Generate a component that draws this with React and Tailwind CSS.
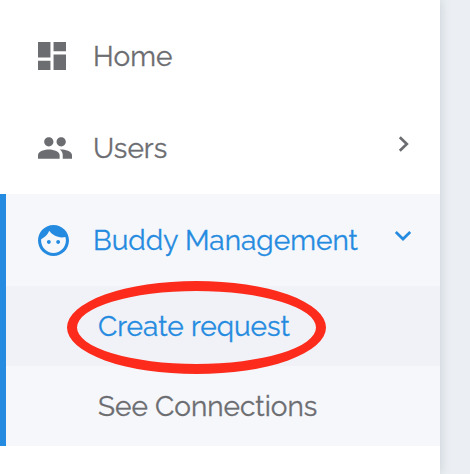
function DashboardIcon() {
  return (
    <svg className="h-7 w-7" viewBox="3 3 18 18" fill="currentColor">
      <path d="M3 13h8V3H3v10zm0 8h8v-6H3v6zm10 0h8V11h-8v10zm0-18v6h8V3h-8z" />
    </svg>
  );
}

function PeopleIcon() {
  return (
    <svg className="h-[22px] w-[34px]" viewBox="1 5 22 14" fill="currentColor">
      <path d="M16 11c1.66 0 2.99-1.34 2.99-3S17.66 5 16 5c-1.66 0-3 1.34-3 3s1.34 3 3 3zm-8 0c1.66 0 2.99-1.34 2.99-3S9.66 5 8 5C6.34 5 5 6.34 5 8s1.34 3 3 3zm0 2c-2.33 0-7 1.17-7 3.5V19h14v-2.5c0-2.33-4.67-3.5-7-3.5zm8 0c-.29 0-.62.02-.97.05 1.16.84 1.97 1.97 1.97 3.45V19h6v-2.5c0-2.33-4.67-3.5-7-3.5z" />
    </svg>
  );
}

function FaceIcon() {
  return (
    <svg className="h-[31px] w-[31px]" viewBox="2 2 20 20" fill="currentColor">
      <path d="M9 11.75c-.69 0-1.25.56-1.25 1.25s.56 1.25 1.25 1.25 1.25-.56 1.25-1.25-.56-1.25-1.25-1.25zm6 0c-.69 0-1.25.56-1.25 1.25s.56 1.25 1.25 1.25 1.25-.56 1.25-1.25-.56-1.25-1.25-1.25zM12 2C6.48 2 2 6.48 2 12s4.48 10 10 10 10-4.48 10-10S17.52 2 12 2zm0 18c-4.41 0-8-3.59-8-8 0-.29.02-.58.05-.86 2.36-1.05 4.23-2.98 5.21-5.37C11.07 8.33 14.05 10 17.42 10c.78 0 1.53-.09 2.25-.26.21.71.33 1.47.33 2.26 0 4.41-3.59 8-8 8z" />
    </svg>
  );
}

function Chevron({ className, d, viewBox }) {
  return (
    <svg className={className} viewBox={viewBox} fill="none" stroke="currentColor" strokeWidth="2.7">
      <path d={d} />
    </svg>
  );
}

function NavItem({ icon, label, chevron }) {
  return (
    <div className="flex h-[92px] items-center pl-8 pr-7">
      <div className="flex w-[55px] shrink-0 items-center">{icon}</div>
      <span className="flex-1 whitespace-nowrap pt-0.5 tracking-[0.04px]">{label}</span>
      {chevron}
    </div>
  );
}

export default function App() {
  return (
    <div className="flex h-[474px] w-[470px] overflow-hidden bg-[#ebeff4] font-['Raleway','Lato',sans-serif] text-[28px] leading-8 text-[#6c6d71] [-webkit-text-stroke:0.3px_currentColor]">
      <nav className="w-[440px] shrink-0 bg-white pt-2.5 shadow-[0_0_10px_rgba(70,85,90,0.22)]">
        <div className="border-l-[6px] border-transparent">
          <NavItem icon={<DashboardIcon />} label="Home" />
          <NavItem
            icon={<PeopleIcon />}
            label="Users"
            chevron={<Chevron className="mb-2 mr-0.5 h-4 w-3" viewBox="0 0 12 16" d="M1.8 1.2 8.8 8 1.8 14.8" />}
          />
        </div>
        <div className="border-l-[6px] border-[#258be0] bg-[#f5f7fb]">
          <div className="text-[#258be0]">
            <NavItem
              icon={<FaceIcon />}
              label="Buddy Management"
              chevron={<Chevron className="mb-2 h-3 w-[18px]" viewBox="0 0 18 12" d="M1.8 2 9 9 16.2 2" />}
            />
          </div>
          <div className="relative flex h-20 items-center bg-[#f1f2f7] pl-[92px] text-[#258be0]">
            <span className="whitespace-nowrap pt-0.5">Create request</span>
            <div className="absolute left-[61px] top-[-5px] h-[93px] w-[259px] rounded-[50%] border-[10px] border-[#fc2b1c]" />
          </div>
          <div className="flex h-20 items-center pl-[92px]">
            <span className="whitespace-nowrap pt-0.5">See Connections</span>
          </div>
        </div>
      </nav>
    </div>
  );
}
